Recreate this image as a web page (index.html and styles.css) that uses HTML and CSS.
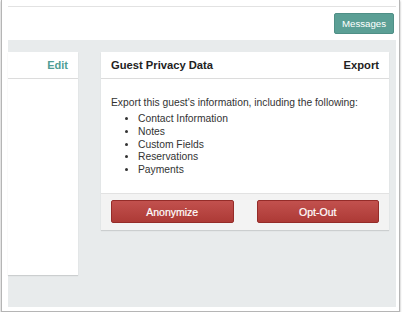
FILE: index.html
```html
<!DOCTYPE html>
<html>
<head>
<meta charset="utf-8">
<link rel="stylesheet" href="styles.css">
</head>
<body>
<div class="window">
  <div class="rule"></div>
  <div class="toolbar">
    <button class="btn-teal">Messages</button>
  </div>
  <div class="stage">
    <div class="card card-left">
      <div class="card-head card-head-left">
        <span class="link">Edit</span>
      </div>
    </div>
    <div class="card card-right">
      <div class="card-head">
        <span class="title">Guest Privacy Data</span>
        <span class="title">Export</span>
      </div>
      <div class="card-body">
        <p class="intro">Export this guest's information, including the following:</p>
        <ul class="items">
          <li>Contact Information</li>
          <li>Notes</li>
          <li>Custom Fields</li>
          <li>Reservations</li>
          <li>Payments</li>
        </ul>
      </div>
      <div class="card-foot">
        <button class="btn-red">Anonymize</button>
        <button class="btn-red">Opt-Out</button>
      </div>
    </div>
  </div>
</div>
</body>
</html>
```

FILE: styles.css
```css
* { box-sizing: border-box; }
html, body { margin: 0; padding: 0; background: #ffffff; }
body { font-family: "Liberation Sans", Arial, sans-serif; color: #333; }

.window {
  margin-left: 1px;
  width: 399px;
  height: 312px;
  border: 1px solid #b5b5b5;
  border-top: none;
  box-shadow: 0 1px 2px rgba(0,0,0,0.35);
  padding: 6px 3px 0 6px;
  background: #fff;
}
.rule { height: 1px; background: #e2e2e2; }
.toolbar {
  display: flex;
  justify-content: flex-end;
  padding: 6px 2px 0 0;
  height: 33px;
}
.btn-teal {
  height: 21px;
  width: 60px;
  padding: 0;
  border: 1px solid #4f8f86;
  border-radius: 2px;
  background: #5b9f95;
  color: #fff;
  font-family: "Liberation Sans", Arial, sans-serif;
  font-size: 9.7px;
}
.stage {
  background: #e8ebec;
  height: 267px;
  display: flex;
  align-items: flex-start;
  padding: 12px 7px 0 0;
  gap: 23px;
}
.card {
  background: #fff;
  box-shadow: 0 1px 1px rgba(0,0,0,0.12);
}
.card-left { width: 70px; height: 223px; }
.card-right { flex: 1; }
.card-head {
  height: 27px;
  border-bottom: 1px solid #dcdcdc;
  display: flex;
  align-items: center;
  justify-content: space-between;
  padding: 0 10px;
}
.card-head-left { justify-content: flex-end; }
.link { color: #4f9e95; font-weight: bold; font-size: 11px; }
.title { color: #222; font-weight: bold; font-size: 11.2px; }
.card-body { padding: 17px 10px 15px; height: 114px; }
.intro { margin: 0 0 4px; font-size: 10.3px; line-height: 13px; }
.items { margin: 0; padding-left: 27px; font-size: 10.3px; line-height: 12.8px; }
.card-foot {
  background: #f3f3f3;
  border-top: 1px solid #e2e2e2;
  padding: 6px 10px 7px;
  display: grid;
  grid-template-columns: 1fr 1fr;
  gap: 23px;
}
.btn-red {
  height: 23px;
  padding: 0;
  border: 1px solid #952c29;
  border-radius: 2px;
  background: linear-gradient(#c2514e, #ad3a36);
  color: #fff;
  font-family: "Liberation Sans", Arial, sans-serif;
  font-size: 10.5px;
  font-weight: normal;
  -webkit-text-stroke: 0.2px #fff;
}
```
